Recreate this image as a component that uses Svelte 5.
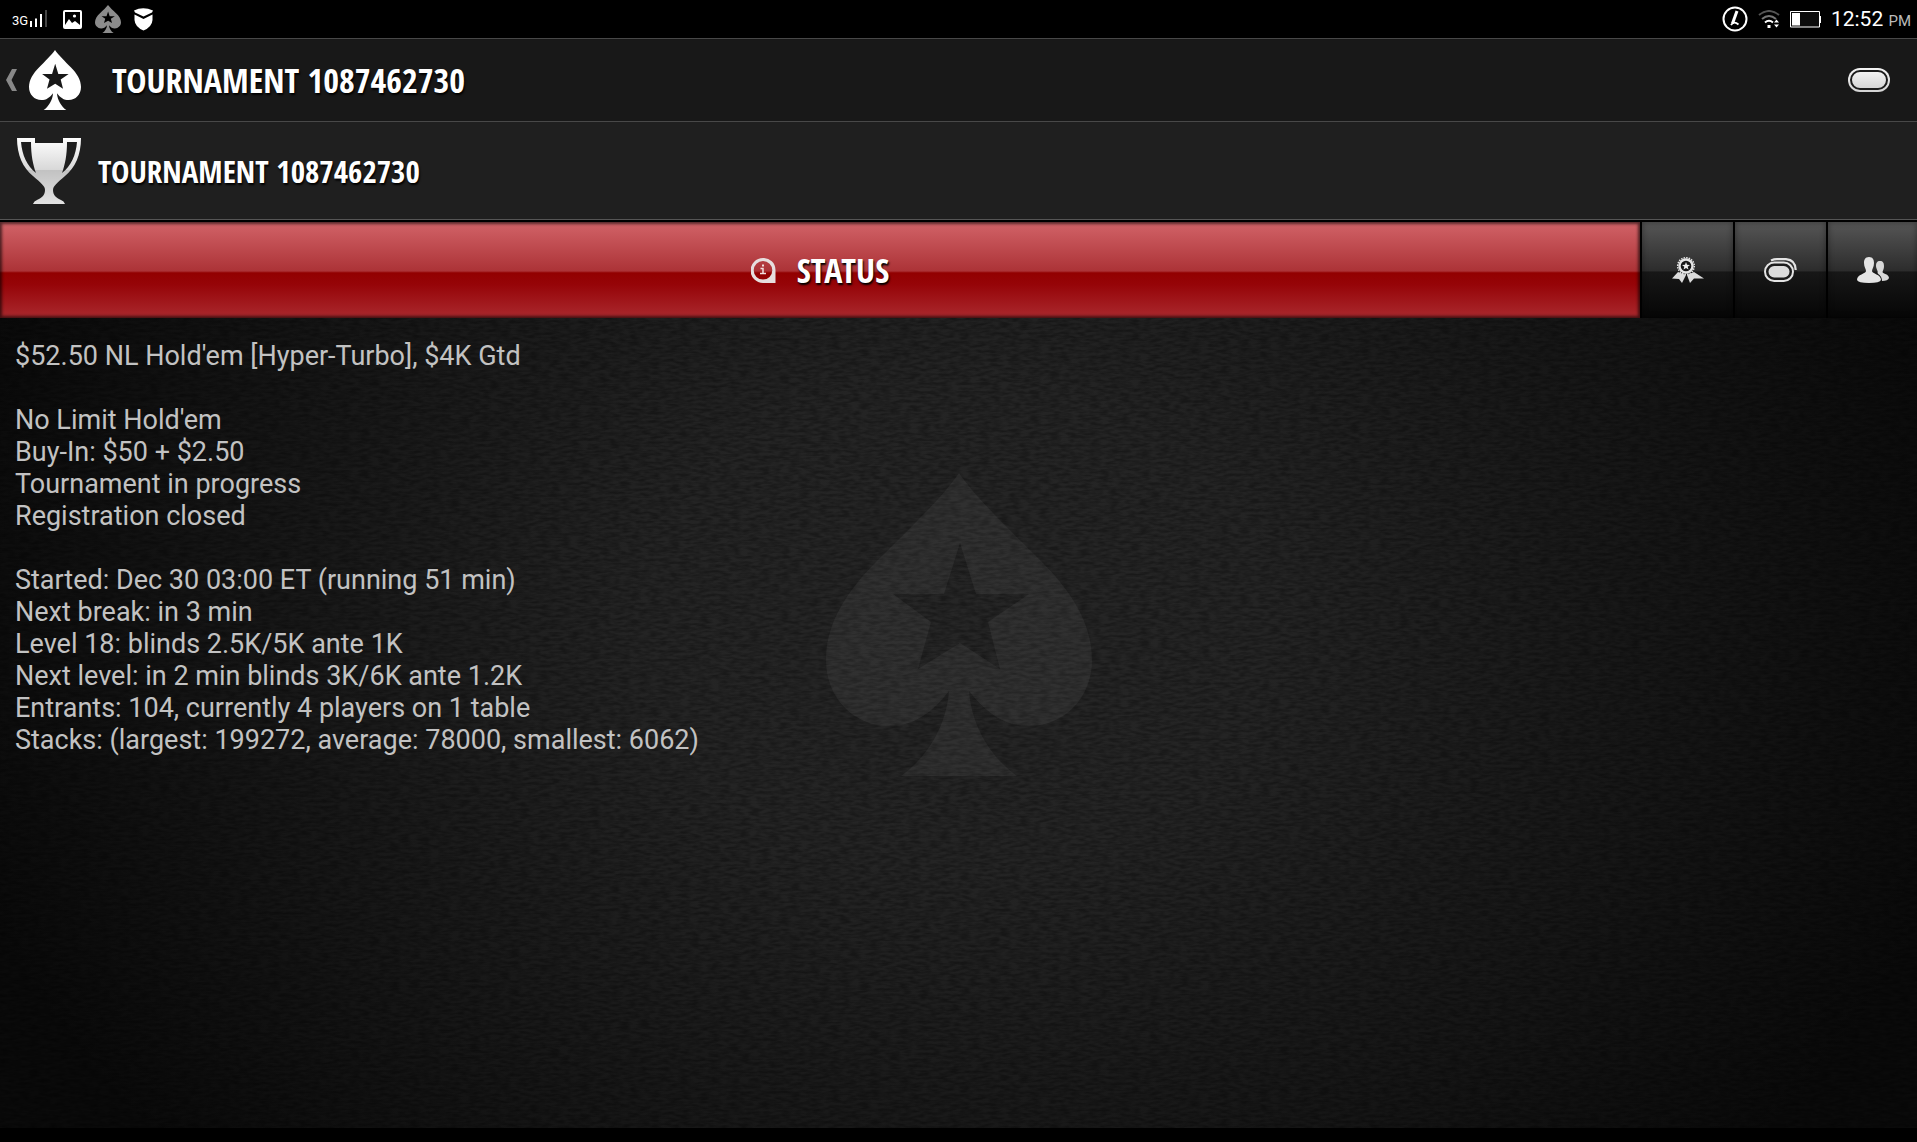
<script lang="ts">
	type Tab = { id: string; label: string };

	const title = 'Tournament 1087462730';

	const tabs: Tab[] = [
		{ id: 'prizes', label: 'Prizes' },
		{ id: 'tables', label: 'Tables' },
		{ id: 'players', label: 'Players' }
	];

	const details: string[][] = [
		["$52.50 NL Hold'em [Hyper-Turbo], $4K Gtd"],
		["No Limit Hold'em", 'Buy-In: $50 + $2.50', 'Tournament in progress', 'Registration closed'],
		[
			'Started: Dec 30 03:00 ET (running 51 min)',
			'Next break: in 3 min',
			'Level 18: blinds 2.5K/5K ante 1K',
			'Next level: in 2 min blinds 3K/6K ante 1.2K',
			'Entrants: 104, currently 4 players on 1 table',
			'Stacks: (largest: 199272, average: 78000, smallest: 6062)'
		]
	];
</script>

{#snippet spade(cls: string)}
	<svg class={cls} viewBox="0 0 266 303" preserveAspectRatio="none" aria-hidden="true">
		<path
			fill="currentColor"
			fill-rule="evenodd"
			d="M133 0C150 25 185 58 215 88C245 118 266 150 266 187C266 225 238 253 203 253C178 253 160 240 143 218C146 255 166 285 191 303H75C100 285 120 255 123 218C106 240 88 253 63 253C28 253 0 225 0 187C0 150 21 118 51 88C81 58 116 25 133 0ZM134 70L150 121H203L162 149L174 196L134 170L92 196L105 149L67 121H118Z"
		/>
	</svg>
{/snippet}

<div class="screen">
	<!-- STATUS BAR -->
	<div class="sysbar">
		<div class="sys-left">
			<div class="signal">
				<span class="net">3G</span>
				<svg width="18" height="18" viewBox="0 0 18 18" aria-hidden="true">
					<path d="M1 17v-6M6 17V8.500M11 17V4" stroke="#fff" stroke-width="2" />
					<path d="M16 17V0" stroke="#444" stroke-width="2" />
				</svg>
			</div>
			<svg width="19" height="19" viewBox="0 0 19 19" aria-hidden="true">
				<path fill="#fff" fill-rule="evenodd" d="M2 0H17Q19 0 19 2V17Q19 19 17 19H2Q0 19 0 17V2Q0 0 2 0ZM2 2V15L6 9L9 13L12 11L17 15V2Z" />
				<circle cx="11.500" cy="6" r="1.600" fill="#fff" />
			</svg>
			{@render spade('sys-spade')}
			<svg width="19" height="23" viewBox="0 0 19 23" aria-hidden="true">
				<path fill="#fff" d="M0 2.500Q9 -2 19 2.500L18 4.500L9.500 8.500L1 4.500ZM.5 6.500L9.500 11L18.500 6.500V12Q18 19 9.500 22.500Q1 19 .5 12Z" />
			</svg>
		</div>
		<div class="sys-right">
			<svg width="26" height="26" viewBox="0 0 26 26" aria-hidden="true">
				<circle cx="13" cy="13" r="11.500" fill="none" stroke="#fff" stroke-width="2" />
				<path d="M15 5L10.500 17.500" fill="none" stroke="#fff" stroke-width="3" />
				<path d="M9 19Q12 14.500 16.500 18.500" fill="none" stroke="#fff" stroke-width="1.800" />
			</svg>
			<svg width="22" height="18" viewBox="0 0 22 18" aria-hidden="true">
				<g fill="none" stroke-width="2">
					<path d="M1 5Q11 -3 21 5" stroke="#555" />
					<path d="M4 9Q11 3 18 9" stroke="#777" />
					<path d="M7 12.500Q11 9 15 12.500" stroke="#fff" />
				</g>
				<path fill="#fff" d="M9.500 15h3v3h-3zM16 12.500L18.500 9.500L21 12.500ZM16 14.500L18.500 17.500L21 14.500Z" />
			</svg>
			<svg width="31" height="17" viewBox="0 0 31 17" aria-hidden="true">
				<path fill="#0c0c0c" stroke="#fff" d="M.5 .5h29v15.500h-29z" />
				<path fill="#fff" d="M2 2h8v12.500H2zM29 5h2v7h-2z" />
			</svg>
			<div class="clock">12:52 <small>PM</small></div>
		</div>
	</div>

	<!-- HEADER -->
	<header class="appbar">
		<a href="#lobby" class="back" aria-label="Back">
			<svg width="11" height="22" viewBox="0 0 11 22" aria-hidden="true">
				<path d="M6 0H11L5.500 11L11 22H6L0 11Z" fill="#888" />
			</svg>
			{@render spade('logo')}
		</a>
		<h1>{title}</h1>
		<button type="button" class="icon-btn" aria-label="My tables">
			<svg width="42" height="24" viewBox="0 0 42 24" aria-hidden="true">
				<defs>
					<linearGradient id="chip" x2="0" y2="1">
						<stop offset="0" stop-color="#f4f4f4" />
						<stop offset="1" stop-color="#d4d4d4" />
					</linearGradient>
				</defs>
				<rect width="42" height="24" rx="12" fill="url(#chip)" />
				<rect x="3" y="3" width="36" height="18" rx="9" fill="url(#chip)" stroke="#1c1c1c" stroke-width="2" />
			</svg>
		</button>
	</header>

	<section class="heading">
		<svg width="64" height="66" viewBox="0 0 64 66" aria-hidden="true">
			<defs>
				<linearGradient id="cup" x2="0" y2="1">
					<stop offset="0" stop-color="#fff" />
					<stop offset=".48" stop-color="#d8d8d8" />
					<stop offset=".49" stop-color="#c2c2c2" />
					<stop offset="1" stop-color="#e2e2e2" />
				</linearGradient>
			</defs>
			<path
				fill="url(#cup)"
				fill-rule="evenodd"
				d="M0 0H18V5H46V0H64C64 17 58 30 48 38C40 45 36 48 36 52C36 58 40 60 44 62Q47 63 48 66H16Q17 63 20 62C24 60 28 58 28 52C28 48 24 45 16 38C6 30 0 17 0 0ZM4 4C5 17 10 28 19 35C16 27 14 17 14 4ZM60 4C59 17 54 28 45 35C48 27 50 17 50 4Z"
			/>
		</svg>
		<h2>{title}</h2>
	</section>

	<!-- TABS -->
	<nav class="tabs">
		<button type="button" class="tab active" aria-current="page">
			<svg width="25" height="25" viewBox="0 0 25 25" aria-hidden="true">
				<path fill="#e6dede" fill-rule="evenodd" d="M12 0A12 12 0 0 1 24.500 12V25H12A12 12 0 0 1 12 0ZM12 3A9.300 9.300 0 1 0 12 21.600A9.300 9.300 0 1 0 12 3Z" />
				<path d="M9.500 10.500H12V15.500M9 15.500H15" fill="none" stroke="#f2dede" stroke-width="1.500" />
				<path d="M11 6.500h2v2h-2z" fill="#f2dede" />
			</svg>
			<span>Status</span>
		</button>
		{#each tabs as tab}
			<button type="button" class="tab" aria-label={tab.label}>
				{#if tab.id === 'prizes'}
					<svg width="32" height="26" viewBox="0 0 32 26" aria-hidden="true">
						<path fill="#dcdcdc" d="M6 15L14 18L10 26L7 22L0 21.500ZM22 15L15 18L18 26L22 21.500L32 21.500Z" />
						<circle cx="14" cy="9" r="6.500" fill="#151515" stroke="#e4e4e4" stroke-width="2.400" />
						<circle cx="14" cy="9" r="8.300" fill="none" stroke="#e4e4e4" stroke-width="1.500" stroke-dasharray="1.500 1.100" />
						<path fill="#eee" d="M14 5L15 7.800L18 7.900L15.700 9.700L16.500 12.500L14 10.900L11.500 12.500L12.300 9.700L10 7.900L13 7.800Z" />
					</svg>
				{:else if tab.id === 'tables'}
					<svg width="33" height="24" viewBox="0 0 33 24" aria-hidden="true">
						<path d="M7 2.500Q10 1.200 13 1.200H22Q31.500 2 31.700 12" fill="none" stroke="#e4e4e4" stroke-width="2.200" />
						<rect x="1" y="4.500" width="28" height="18.500" rx="9.200" fill="#1c1c1c" stroke="#e4e4e4" stroke-width="2" />
						<rect x="4.500" y="8" width="21" height="11.500" rx="5.700" fill="#dcdcdc" />
					</svg>
				{:else}
					<svg width="32" height="26" viewBox="0 0 32 26" aria-hidden="true">
						<path fill="#d8d8d8" d="M23 4C26 4 27 6 27 9C27 12 26 13 25.500 15C26 17 32 17 32 21Q31 24 25 24C25 19 22 18 20.500 16C21.500 14 19 12 19 9C19 6 20 4 23 4Z" />
						<path fill="#e4e4e4" d="M12 0C16 0 17 3 17 6C17 10 15 12 15 14C15 17 24 17 24 23Q23 26 12 26Q1 26 0 23C0 17 9 17 9 14C9 12 7 10 7 6C7 3 8 0 12 0Z" />
					</svg>
				{/if}
			</button>
		{/each}
	</nav>

	<!-- DETAILS -->
	<main>
		<svg class="leather" aria-hidden="true">
			<filter id="grain" x="0" y="0" width="100%" height="100%">
				<feTurbulence type="fractalNoise" baseFrequency=".1 .34" numOctaves="2" seed="4" />
				<feColorMatrix values="0 0 0 0 0  0 0 0 0 0  0 0 0 0 0  2.4 0 0 0 -.8" />
			</filter>
			<rect width="100%" height="100%" filter="url(#grain)" />
		</svg>
		{@render spade('watermark')}
		<div class="details">
			{#each details as group}
				<div>
					{#each group as line}
						<p>{line}</p>
					{/each}
				</div>
			{/each}
		</div>
	</main>
</div>

<style>
:global(body) { background: #000; }

.screen { min-height: 100vh; box-sizing: border-box; padding-bottom: 14px; display: flex; flex-direction: column; font-family: Roboto, sans-serif; color: #fff; }
h1, h2, p { margin: 0; }
svg { display: block; flex-shrink: 0; }
button { border: 0; padding: 0; color: inherit; cursor: pointer; }

/* Status bar */
.sysbar { height: 38px; display: flex; justify-content: space-between; align-items: center; padding: 0 6px 0 12px; }
.sys-left { display: flex; align-items: center; gap: 13px; }
.sys-right { display: flex; align-items: center; gap: 10px; }
.signal { display: flex; align-items: flex-end; gap: 2px; margin-right: 2px; }
.net { font-size: 13px; line-height: 14px; }
.sys-left :global(.sys-spade) { width: 26px; height: 28px; color: #8c8c8c; }
.clock { padding-top: 2px; font-size: 21px; line-height: 24px; }
.clock small { font-size: 15px; color: #bbb; }

/* Header */
.appbar { height: 82px; display: flex; align-items: center; padding: 0 27px 0 6px; background: #181818; border-top: 1px solid #484848; border-bottom: 1px solid #484848; }
.back { display: flex; align-items: center; gap: 12px; color: #fff; }
.back :global(.logo) { width: 52px; height: 60px; }
h1, h2, .tab { font-family: "Liberation Sans Narrow", "Open Sans Condensed", Roboto, sans-serif; font-weight: 700; text-transform: uppercase; text-shadow: 1px 2px 2px #000; }
h1 { flex: 1; padding-left: 31px; font-size: 34px; line-height: 40px; }
.icon-btn { background: none; }
.heading { height: 97px; display: flex; align-items: center; gap: 17px; padding: 0 17px; background: #1f1f1f; border-bottom: 1px solid #555; }
h2 { font-size: 31px; line-height: 40px; }

/* Tabs */
.tabs { display: grid; grid-template-columns: 1fr 91px 91px 89px; gap: 2px; padding-top: 2px; background: #000; }
.tab { height: 96px; display: flex; align-items: center; justify-content: center; gap: 21px; font-size: 34px; background: linear-gradient(#565656, #2c2c2c 51%, #171717 52%, #060606); box-shadow: inset 0 0 6px rgba(0, 0, 0, 0.4); }
.tab.active { background: linear-gradient(#d26368, #ac3337 51%, #920000 53%, #960408 65%, #aa292e); box-shadow: inset 0 0 3px 2px rgba(0, 0, 0, 0.6); }

/* Details */
main { position: relative; flex: 1; background: radial-gradient(ellipse 54% 100% at 50% 38%, #262626 0%, #242424 30%, #151515 72%, #0a0a0a 100%); }
.leather { position: absolute; inset: 0; width: 100%; height: 100%; opacity: 0.3; }
main :global(.watermark) { position: absolute; top: 155px; left: 50%; width: 266px; height: 303px; transform: translateX(-50%); color: rgba(255, 255, 255, 0.05); }
.details { position: relative; display: flex; flex-direction: column; gap: 32px; padding: 22px 15px; font-size: 27px; line-height: 32px; color: #c2c2c2; }
</style>
